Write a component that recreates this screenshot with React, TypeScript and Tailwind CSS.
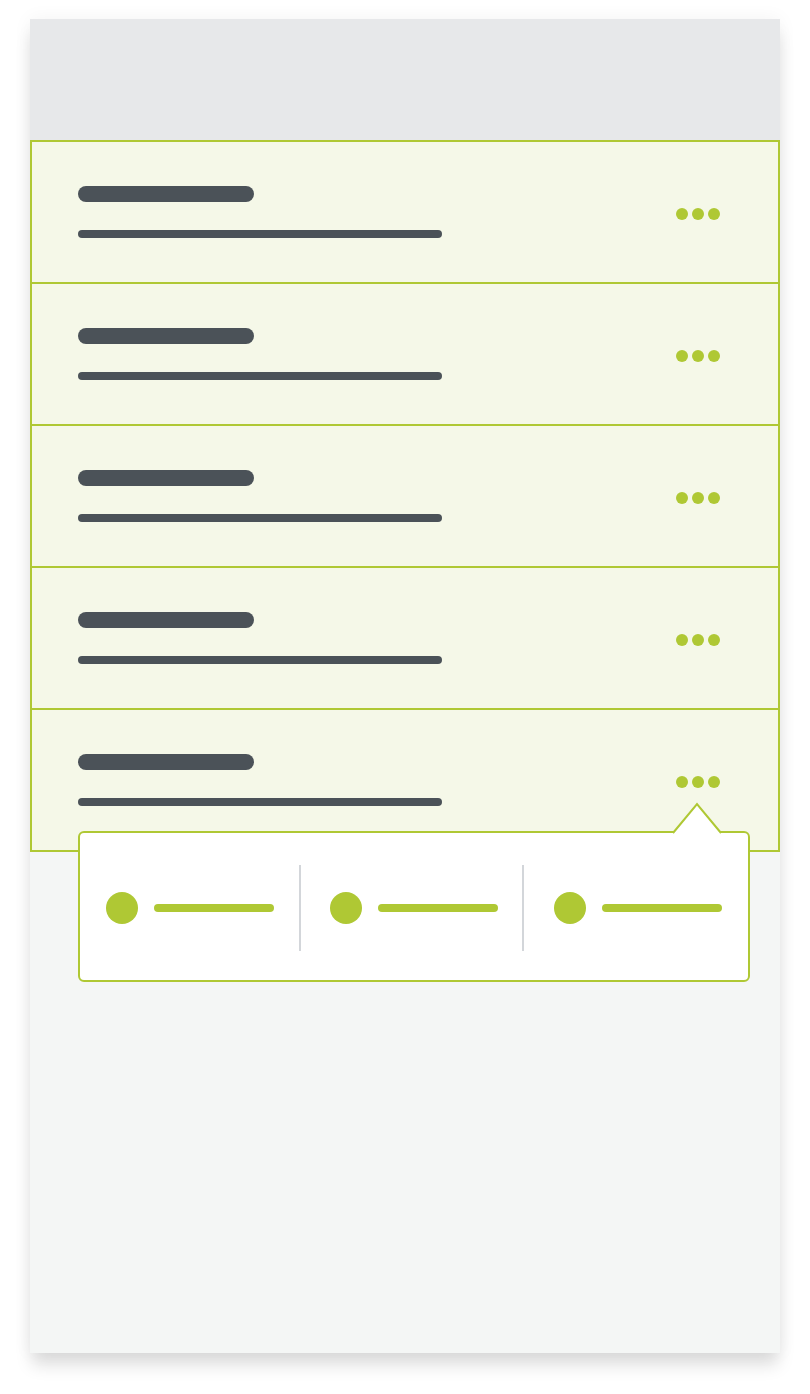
import React from 'react'

const rows = [0, 1, 2, 3, 4]

const Dots = () => (
  <div className='flex gap-[4px] mt-[4px]'>
    <span className='w-[12px] h-[12px] rounded-full bg-[#afc834]' />
    <span className='w-[12px] h-[12px] rounded-full bg-[#afc834]' />
    <span className='w-[12px] h-[12px] rounded-full bg-[#afc834]' />
  </div>
)

const Action = ({ pad }: { pad: string }) => (
  <div className={`flex items-center gap-4 ${pad}`}>
    <span className='w-[32px] h-[32px] rounded-full bg-[#afc834]' />
    <span className='w-[120px] h-[8px] rounded-full bg-[#afc834]' />
  </div>
)

const App = () => {
  return (
    <div className='w-[810px] h-[1394px] bg-white pt-[19px] pl-[30px]'>
      <div className='relative w-[750px] h-[1334px] bg-[#f4f6f5] flex flex-col shadow-[0_14px_16px_-2px_rgba(0,0,0,0.13),0_0_18px_rgba(0,0,0,0.05)]'>
        <div className='h-[121px] bg-[#e7e8ea]' />

        {rows.map((r) => (
          <div
            key={r}
            className={`bg-[#f5f8e8] border-2 border-[#afc834] flex items-center justify-between pl-[46px] pr-[58px] ${
              r === rows.length - 1 ? 'h-[144px]' : 'h-[142px] border-b-0'
            }`}
          >
            <div className='flex flex-col'>
              <span className='w-[176px] h-[16px] rounded-full bg-[#4b5258]' />
              <span className='w-[364px] h-[8px] rounded-full bg-[#4b5258] mt-[28px]' />
            </div>
            <Dots />
          </div>
        ))}

        {/* popover under the last row menu */}
        <div className='absolute top-[812px] left-[48px] w-[672px] h-[151px] bg-white border-2 border-[#afc834] rounded-[6px] flex items-center pt-[3px]'>
          <svg
            className='absolute top-[-31px] left-[592px]'
            width='50'
            height='33'
            viewBox='0 0 50 33'
          >
            <polygon points='1,31 25,2 49,31 49,33 1,33' fill='#ffffff' />
            <polyline points='1,31 25,2 49,31' fill='none' stroke='#afc834' strokeWidth='2' />
          </svg>
          <div className='w-[219px]'>
            <Action pad='pl-[26px]' />
          </div>
          <span className='w-[2px] h-[86px] bg-[#d3d6da]' />
          <div className='w-[221px]'>
            <Action pad='pl-[29px]' />
          </div>
          <span className='w-[2px] h-[86px] bg-[#d3d6da]' />
          <div className='flex-1'>
            <Action pad='pl-[30px]' />
          </div>
        </div>
      </div>
    </div>
  )
}

export default App
